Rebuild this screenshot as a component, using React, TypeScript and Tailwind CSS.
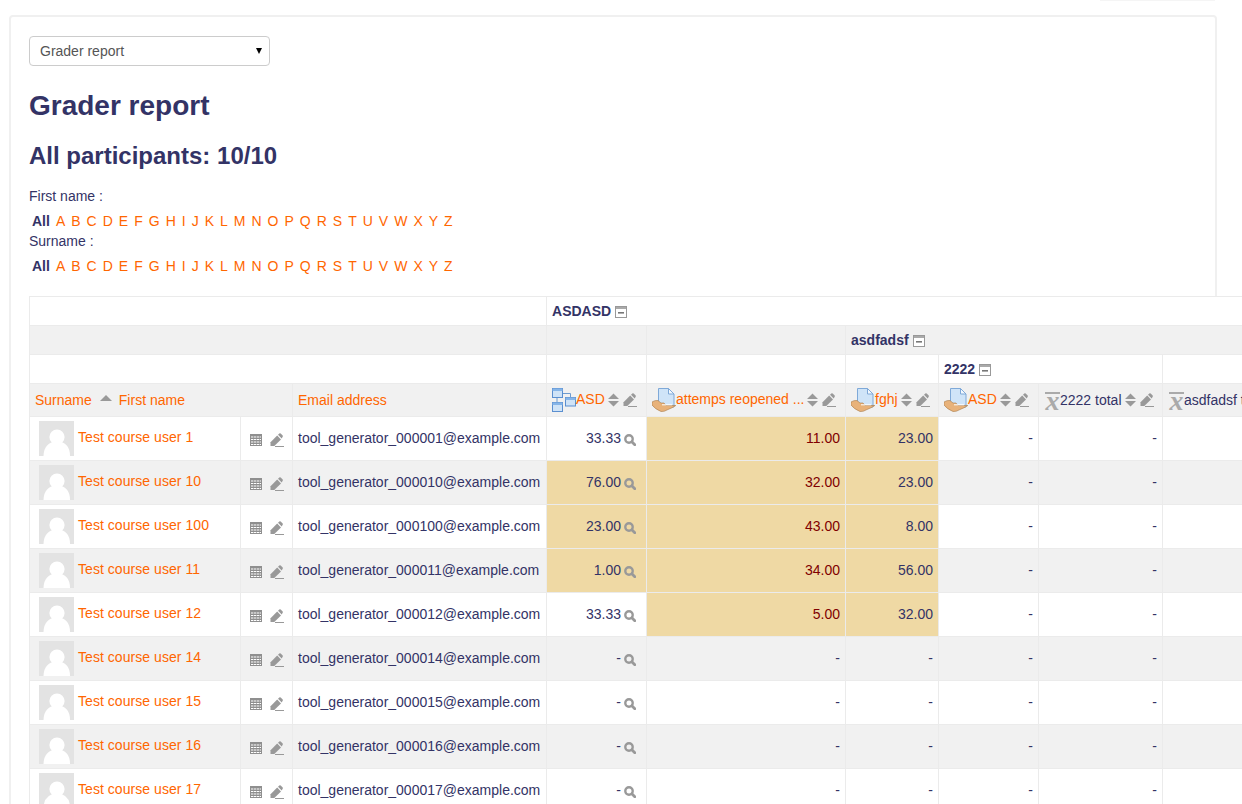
import React from "react";

const Sort = () => (
  <svg width="11" height="14" viewBox="0 0 11 14" className="shrink-0 block">
    <path d="M5.5 0.5 L11 6 H0 Z M0 8 H11 L5.5 13.5 Z" fill="#999" />
  </svg>
);
const Edit = () => (
  <svg width="14" height="14" viewBox="0 0 14 14" className="shrink-0 block">
    <path d="M0.5 9.3 L7.2 2.6 L11 6.4 L4.3 13 H0.5 Z" fill="#999" />
    <path d="M8 1.8 L9.3 .5 Q10 0 10.7 .5 L12.7 2.5 Q13.1 3.1 12.7 3.7 L11.7 5.6 Z" fill="#999" />
    <rect x="5" y="13" width="9" height="1" fill="#999" />
  </svg>
);
const Search = () => (
  <svg width="12" height="12" viewBox="0 0 12 12" className="shrink-0 block">
    <circle cx="5" cy="5" r="3.7" fill="none" stroke="#999" strokeWidth="2.4" />
    <path d="M7.8 7.8 L10.8 10.8" stroke="#999" strokeWidth="2.8" strokeLinecap="round" />
  </svg>
);
const Grid = () => (
  <svg width="12" height="12" viewBox="0 0 12 12" className="shrink-0 block">
    <rect width="12" height="12" fill="#8f8f8f" />
    <path d="M1 3 H11 M1 5.5 H11 M1 8 H11 M1 10.5 H11" stroke="#fff" strokeWidth="1" strokeDasharray="2.4 .6" />
  </svg>
);
const Minus = () => (
  <svg width="12" height="12" viewBox="0 0 12 12" className="shrink-0 block">
    <rect x=".5" y=".5" width="11" height="11" fill="#fff" stroke="#999" />
    <rect x="1" y="1" width="10" height="2" fill="#aaa" />
    <rect x="3" y="6" width="6" height="1.6" fill="#777" />
  </svg>
);
const Tree = () => (
  <svg width="24" height="24" viewBox="0 0 24 24" className="shrink-0 block">
    <path d="M10 5.5 H18.5 V9 M5 9 V14" fill="none" stroke="#6d9bd0" />
    {[[0.5, 0.5, 10, 9], [13.5, 9.5, 10, 8.5], [0.5, 14.5, 10, 9]].map(([x, y, w, h], i) => (
      <g key={i}>
        <rect x={x} y={y} width={w} height={h} fill="#cfe3f7" stroke="#5b8fd0" />
        <rect x={x} y={y} width={w} height="2.5" fill="#86b5e8" />
      </g>
    ))}
  </svg>
);
const Assign = () => (
  <svg width="24" height="24" viewBox="0 0 24 24" className="shrink-0 block">
    <path d="M6.5 .5 H16.5 L22 6 V19 H6.5 Z" fill="#cfe4f8" stroke="#7fa9d8" />
    <path d="M16.5 .5 V6 H22 Z" fill="#f2f8fe" stroke="#7fa9d8" />
    <path d="M0 14 Q3 12 6 12.5 L9 15 H12 L14 17.5 H23.8 Q20 20 16 21.5 Q12 24 9 23.5 Q3 21 0 17 Z" fill="#e8b27a" stroke="#a87a48" strokeWidth=".6" />
    <path d="M10 16.8 H20" stroke="#fff" strokeWidth="1" />
  </svg>
);
const Mean = () => (
  <span className="shrink-0 inline-block w-[15px] h-[19px] mt-[3px] border-t-2 border-[#aaa] text-center font-['Liberation_Serif',serif] italic font-bold text-[28px] leading-[14px] text-[#aaa]">
    x
  </span>
);
const Avatar = () => (
  <svg width="35" height="35" viewBox="0 0 35 35" className="block shrink-0">
    <rect width="35" height="35" fill="#e3e3e3" />
    <circle cx="18" cy="16" r="7.6" fill="#fff" />
    <path d="M4.5 35 Q5 21 18 20.5 Q31 21 31 35 Z" fill="#fff" />
  </svg>
);

const letters = "ABCDEFGHIJKLMNOPQRSTUVWXYZ".split("");
const Bar = () => (
  <div className="flex h-[20px] items-center pl-[3px] text-[14px]">
    <b className="font-bold mr-[6px]">All</b>
    {letters.map((l) => (
      <span key={l} className="text-[#ff6600] mr-[6px]">
        {l}
      </span>
    ))}
  </div>
);

type Row = { n: string; e: string; v: string[]; hi: number[] };
const mk = (n: string, e: string, v: string[], hi: number[]): Row => ({ n, e, v, hi });
const dash = ["-", "-", "-"];
const rows: Row[] = [
  mk("1", "000001", ["33.33", "11.00", "23.00"], [1, 2]),
  mk("10", "000010", ["76.00", "32.00", "23.00"], [0, 1, 2]),
  mk("100", "000100", ["23.00", "43.00", "8.00"], [0, 1, 2]),
  mk("11", "000011", ["1.00", "34.00", "56.00"], [0, 1, 2]),
  mk("12", "000012", ["33.33", "5.00", "32.00"], [1, 2]),
  mk("14", "000014", dash, []),
  mk("15", "000015", dash, []),
  mk("16", "000016", dash, []),
  mk("17", "000017", dash, []),
];

const bd = "border border-[#ebebeb] p-0";

export default function App() {
  return (
    <div className="w-[1242px] h-[804px] overflow-hidden bg-white font-['Liberation_Sans',Arial,sans-serif] text-[14px] text-[#333366]">
      <div className="h-[1px] pl-[1100px]">
        <div className="h-[1px] w-[115px] bg-[#f5f5f5]" />
      </div>
      <div className="ml-[9px] mt-[14px] w-[1208px] h-[900px] border-2 border-[#f0f0f0] rounded-[4px] pl-[18px] pt-[19px]">
        <div className="relative w-[241px]">
          <select className="block w-[241px] h-[30px] appearance-none bg-white border border-[#cccccc] rounded-[4px] pl-[10px] text-[14px] text-[#555555]">
            <option>Grader report</option>
          </select>
          <svg width="6" height="6" viewBox="0 0 6 6" className="absolute right-[8px] top-[12px] block">
            <path d="M0 0 H6 L3 6 Z" fill="#000" />
          </svg>
        </div>
        <h2 className="mt-[20px] h-[40px] text-[28px] leading-[40px] font-bold">Grader report</h2>
        <h3 className="mt-[15px] h-[30px] text-[24px] leading-[30px] font-bold">All participants: 10/10</h3>
        <div className="mt-[15px] h-[20px] leading-[20px]">First name :</div>
        <div className="mt-[5px]">
          <Bar />
        </div>
        <div className="h-[20px] leading-[20px] mt-[0px]">Surname :</div>
        <div className="mt-[5px]">
          <Bar />
        </div>
        <table className="mt-[20px] table-fixed border-collapse w-[1333px] bg-white">
          <colgroup>
            <col className="w-[211px]" />
            <col className="w-[52px]" />
            <col className="w-[254px]" />
            <col className="w-[100px]" />
            <col className="w-[199px]" />
            <col className="w-[93px]" />
            <col className="w-[100px]" />
            <col className="w-[124px]" />
            <col className="w-[200px]" />
          </colgroup>
          <tbody>
            <tr className="h-[29px] bg-white">
              <td colSpan={3} className={bd} />
              <td colSpan={6} className={bd + " pl-[5px]"}>
                <div className="flex items-center gap-[4px] font-bold">
                  ASDASD
                  <span className="mt-[2px]">
                    <Minus />
                  </span>
                </div>
              </td>
            </tr>
            <tr className="h-[29px] bg-[#f1f1f1]">
              <td colSpan={3} className={bd} />
              <td className={bd} />
              <td className={bd} />
              <td colSpan={4} className={bd + " pl-[5px]"}>
                <div className="flex items-center gap-[4px] font-bold">
                  asdfadsf
                  <span className="mt-[2px]">
                    <Minus />
                  </span>
                </div>
              </td>
            </tr>
            <tr className="h-[29px] bg-white">
              <td colSpan={3} className={bd} />
              <td className={bd} />
              <td className={bd} />
              <td className={bd} />
              <td colSpan={2} className={bd + " pl-[5px]"}>
                <div className="flex items-center gap-[4px] font-bold">
                  2222
                  <span className="mt-[2px]">
                    <Minus />
                  </span>
                </div>
              </td>
              <td className={bd} />
            </tr>
            <tr className="h-[33px] bg-[#f1f1f1]">
              <td colSpan={2} className={bd + " pl-[5px]"}>
                <div className="flex items-center text-[#ff6600]">
                  Surname
                  <svg width="12" height="6" viewBox="0 0 12 6" className="ml-[8px] mr-[7px] mb-[4px] block">
                    <path d="M6 0 L12 6 H0 Z" fill="#999" />
                  </svg>
                  First name
                </div>
              </td>
              <td className={bd + " pl-[5px] text-[#ff6600]"}>Email address</td>
              <td className={bd + " pl-[5px]"}>
                <div className="flex items-center text-[#ff6600]">
                  <Tree />
                  <span className="mb-[2px]">ASD</span>
                  <span className="ml-[3px]"><Sort /></span>
                  <span className="ml-[4px]"><Edit /></span>
                </div>
              </td>
              <td className={bd + " pl-[5px]"}>
                <div className="flex items-center text-[#ff6600]">
                  <Assign />
                  <span className="whitespace-nowrap mb-[2px]">attemps reopened ...</span>
                  <span className="ml-[3px]"><Sort /></span>
                  <span className="ml-[4px]"><Edit /></span>
                </div>
              </td>
              <td className={bd + " pl-[5px]"}>
                <div className="flex items-center text-[#ff6600]">
                  <Assign />
                  <span className="mb-[2px]">fghj</span>
                  <span className="ml-[3px]"><Sort /></span>
                  <span className="ml-[4px]"><Edit /></span>
                </div>
              </td>
              <td className={bd + " pl-[5px]"}>
                <div className="flex items-center text-[#ff6600]">
                  <Assign />
                  <span className="mb-[2px]">ASD</span>
                  <span className="ml-[3px]"><Sort /></span>
                  <span className="ml-[4px]"><Edit /></span>
                </div>
              </td>
              <td className={bd + " pl-[6px]"}>
                <div className="flex items-center">
                  <Mean />
                  <span className="whitespace-nowrap">2222 total</span>
                  <span className="ml-[3px]"><Sort /></span>
                  <span className="ml-[4px]"><Edit /></span>
                </div>
              </td>
              <td className={bd + " pl-[6px]"}>
                <div className="flex items-center">
                  <Mean />
                  <span className="whitespace-nowrap">asdfadsf total</span>
                </div>
              </td>
            </tr>
            {rows.map((r, i) => (
              <tr key={r.n} className={"h-[44px] " + (i % 2 ? "bg-[#f1f1f1]" : "bg-white")}>
                <td className={bd + " pl-[9px]"}>
                  <div className="flex items-center gap-[4px]">
                    <Avatar />
                    <span className="text-[#ff6600] mb-[3px] tracking-[0.05px]">Test course user {r.n}</span>
                  </div>
                </td>
                <td className={bd + " pl-[9px]"}>
                  <div className="flex items-center gap-[8px] mt-[3px]">
                    <Grid />
                    <Edit />
                  </div>
                </td>
                <td className={bd + " pl-[5px] whitespace-nowrap"}>tool_generator_{r.e}@example.com</td>
                <td className={bd + " pr-[10px] " + (r.hi.includes(0) ? "bg-[#efd9a4]" : "")}>
                  <div className="flex items-center justify-end gap-[3px]">
                    <span>{r.v[0]}</span>
                    <span className="mt-[3px]"><Search /></span>
                  </div>
                </td>
                <td className={bd + " pr-[5px] text-right " + (r.hi.includes(1) ? "bg-[#efd9a4] text-[#800000]" : "")}>{r.v[1]}</td>
                <td className={bd + " pr-[5px] text-right " + (r.hi.includes(2) ? "bg-[#efd9a4]" : "")}>{r.v[2]}</td>
                <td className={bd + " pr-[5px] text-right"}>-</td>
                <td className={bd + " pr-[5px] text-right"}>-</td>
                <td className={bd} />
              </tr>
            ))}
          </tbody>
        </table>
      </div>
    </div>
  );
}
